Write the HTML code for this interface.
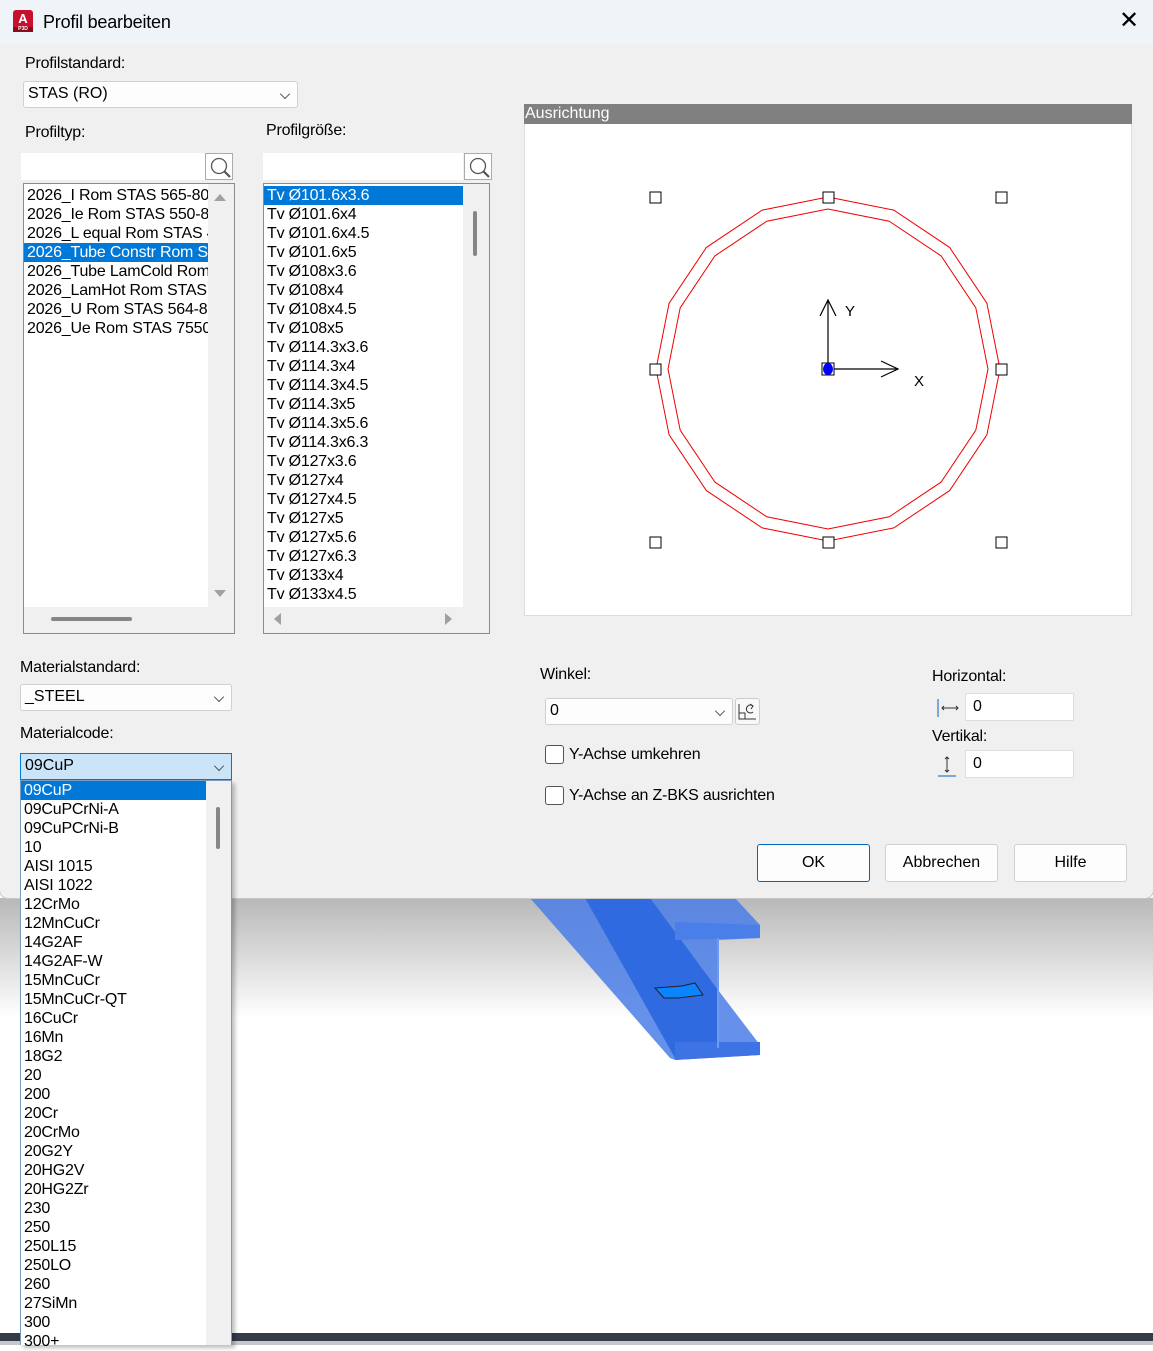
<!DOCTYPE html>
<html><head><meta charset="utf-8"><style>
*{box-sizing:border-box;margin:0;padding:0}
body{width:1153px;height:1345px;position:relative;overflow:hidden;background:#fff;font-family:"Liberation Sans",sans-serif;font-size:16px;color:#000}
.a{position:absolute}
.dlg{left:0;top:0;width:1153px;height:898px;background:#f0f0f0;box-shadow:0 0 0 1px #c8c8c8;border-radius:0 0 8px 8px}
.lbl{position:absolute;font-size:16px;white-space:nowrap;letter-spacing:-0.2px}
.box{position:absolute;background:#fff;border:1px solid #d0d0d0}
.combo{position:absolute;background:#fdfdfd;border:1px solid #d0d0d0;border-radius:3px;padding-left:4px;line-height:24px}
.chev{position:absolute;right:8px;top:8px;width:8px;height:8px;border-right:1px solid #444;border-bottom:1px solid #444;transform:rotate(45deg) scale(.9)}
.list div{height:19px;line-height:19px;white-space:nowrap;padding-left:3px;letter-spacing:-0.2px}
.sel{background:#0078d7;color:#fff}
.btn{position:absolute;background:#fdfdfd;border:1px solid #d0d0d0;border-radius:3px;text-align:center;line-height:36px;height:38px;width:113px}
.cb{position:absolute;width:19px;height:19px;border:1px solid #555;border-radius:3px;background:#fff}
</style></head><body>
<div class="a" style="left:0;top:898px;width:1153px;height:120px;background:linear-gradient(#b8b8b8,#fff)"></div>
<svg class="a" style="left:500px;top:880px" width="280" height="190">
<polygon points="30,18 235,18 260,45 260,58 218,60 218,110 260,165 260,175 175,180 170,178" fill="#4a7ee8" opacity=".85"/>
<polygon points="85,18 150,18 218,110 218,170 175,178" fill="#2f6ae0"/>
<polygon points="175,42 260,45 260,58 175,60" fill="#4a7ee8"/>
<polygon points="175,162 260,162 260,175 175,180" fill="#3d73e5"/>
<line x1="218" y1="58" x2="218" y2="168" stroke="#6d9af0" stroke-width="2"/>
<polygon points="155,108 182,106 195,103 203,115 178,118 164,118" fill="#0a84ff" stroke="#222"/>
</svg>
<div class="a" style="left:0;top:1333px;width:1153px;height:8px;background:#333d4a"></div>
<div class="a" style="left:0;top:1341px;width:1153px;height:4px;background:#c8c8c8"></div>

<div class="a dlg">
<div class="a" style="left:0;top:0;width:1153px;height:44px;background:#eef4f7"></div>
<div class="a" style="left:13px;top:10px;width:20px;height:22px;background:#c8102e;border-radius:3px;color:#fff;font-size:13px;font-weight:bold;text-align:center;line-height:17px">A<div style="font-size:5px;line-height:5px;background:#8a0a1e">P3D</div></div>
<div class="lbl" style="left:43px;top:12px;font-size:18px">Profil bearbeiten</div>
<div class="lbl" style="left:1119px;top:6px;font-size:24px;font-weight:lighter">✕</div>

<div class="lbl" style="left:25px;top:55px">Profilstandard:</div>
<div class="combo" style="left:23px;top:81px;width:275px;height:27px">STAS (RO)<span class="chev"></span></div>
<div class="lbl" style="left:25px;top:124px">Profiltyp:</div>
<div class="lbl" style="left:266px;top:122px">Profilgröße:</div>

<div class="box" style="left:21px;top:153px;width:184px;height:27px;border:none"></div>
<div class="box" style="left:205px;top:153px;width:28px;height:27px;border:1px solid #aaa"></div>
<svg class="a" style="left:208px;top:155px" width="26" height="26"><circle cx="11" cy="11" r="7.5" fill="none" stroke="#555" stroke-width="1.3"/><line x1="16.5" y1="16.5" x2="22" y2="22" stroke="#555" stroke-width="2.2"/></svg>
<div class="box" style="left:263px;top:153px;width:200px;height:27px;border:none"></div>
<div class="box" style="left:464px;top:153px;width:28px;height:27px;border:1px solid #aaa"></div>
<svg class="a" style="left:467px;top:155px" width="26" height="26"><circle cx="11" cy="11" r="7.5" fill="none" stroke="#555" stroke-width="1.3"/><line x1="16.5" y1="16.5" x2="22" y2="22" stroke="#555" stroke-width="2.2"/></svg>

<div class="a" style="left:23px;top:183px;width:212px;height:451px;border:1px solid #8a8a92;background:#f0f0f0"></div>
<div class="a list" style="left:24px;top:184px;width:184px;height:423px;background:#fff;overflow:hidden;padding-top:2px">
<div>2026_I Rom STAS 565-80</div><div>2026_Ie Rom STAS 550-80</div><div>2026_L equal Rom STAS 424</div><div class="sel">2026_Tube Constr Rom STAS</div><div>2026_Tube LamCold Rom STAS</div><div>2026_LamHot Rom STAS</div><div>2026_U Rom STAS 564-80</div><div>2026_Ue Rom STAS 7550</div></div>
<div class="a" style="left:214px;top:194px;width:0;height:0;border:6px solid transparent;border-bottom:7px solid #a0a0a0;border-top:none"></div>
<div class="a" style="left:214px;top:590px;width:0;height:0;border:6px solid transparent;border-top:7px solid #a0a0a0;border-bottom:none"></div>
<div class="a" style="left:51px;top:617px;width:81px;height:4px;border-radius:2px;background:#868686"></div>

<div class="a" style="left:263px;top:183px;width:227px;height:451px;border:1px solid #8a8a92;background:#f0f0f0"></div>
<div class="a list" style="left:264px;top:184px;width:199px;height:423px;background:#fff;overflow:hidden;padding-top:2px">
<div class="sel">Tv Ø101.6x3.6</div><div>Tv Ø101.6x4</div><div>Tv Ø101.6x4.5</div><div>Tv Ø101.6x5</div><div>Tv Ø108x3.6</div><div>Tv Ø108x4</div><div>Tv Ø108x4.5</div><div>Tv Ø108x5</div><div>Tv Ø114.3x3.6</div><div>Tv Ø114.3x4</div><div>Tv Ø114.3x4.5</div><div>Tv Ø114.3x5</div><div>Tv Ø114.3x5.6</div><div>Tv Ø114.3x6.3</div><div>Tv Ø127x3.6</div><div>Tv Ø127x4</div><div>Tv Ø127x4.5</div><div>Tv Ø127x5</div><div>Tv Ø127x5.6</div><div>Tv Ø127x6.3</div><div>Tv Ø133x4</div><div>Tv Ø133x4.5</div></div>
<div class="a" style="left:473px;top:211px;width:4px;height:45px;border-radius:2px;background:#868686"></div>
<div class="a" style="left:274px;top:613px;border:6px solid transparent;border-right:7px solid #a0a0a0;border-left:none"></div>
<div class="a" style="left:445px;top:613px;border:6px solid transparent;border-left:7px solid #a0a0a0;border-right:none"></div>

<div class="a" style="left:524px;top:104px;width:608px;height:512px;background:#fff;border:1px solid #ddd"></div>
<div class="a" style="left:524px;top:104px;width:608px;height:20px;background:#808080;color:#fff;line-height:20px;padding-left:1px">Ausrichtung</div>
<svg class="a" style="left:0;top:0" width="1153" height="620">
<polygon fill="none" stroke="#e00" stroke-width="1" points="828,197 893.8,210.1 949.6,247.4 986.9,303.2 1000,369 986.9,434.8 949.6,490.6 893.8,527.9 828,541 762.2,527.9 706.4,490.6 669.1,434.8 656,369 669.1,303.2 706.4,247.4 762.2,210.1"/>
<polygon fill="none" stroke="#e00" stroke-width="1" points="828,209 889.2,221.2 941.1,255.9 975.8,307.8 988,369 975.8,430.2 941.1,482.1 889.2,516.8 828,529 766.8,516.8 714.9,482.1 680.2,430.2 668,369 680.2,307.8 714.9,255.9 766.8,221.2"/>
<g fill="#fff" stroke="#000">
<rect x="650" y="192" width="11" height="11"/><rect x="823" y="192" width="11" height="11"/><rect x="996" y="192" width="11" height="11"/>
<rect x="650" y="364" width="11" height="11"/><rect x="996" y="364" width="11" height="11"/>
<rect x="650" y="537" width="11" height="11"/><rect x="823" y="537" width="11" height="11"/><rect x="996" y="537" width="11" height="11"/>
</g>
<g stroke="#000" fill="none" stroke-width="1.2">
<line x1="828" y1="369" x2="828" y2="300"/><polyline points="820,316 828,300 836,316"/>
<line x1="828" y1="369" x2="898" y2="369"/><polyline points="881,361 898,369 881,377"/>
</g>
<rect x="822" y="363" width="12" height="12" fill="#fff" stroke="#000"/>
<ellipse cx="828" cy="369" rx="5" ry="6" fill="#00f"/>
<text x="845" y="316" font-family="Liberation Sans" font-size="15">Y</text>
<text x="914" y="386" font-family="Liberation Sans" font-size="15">X</text>
</svg>

<div class="lbl" style="left:20px;top:659px">Materialstandard:</div>
<div class="combo" style="left:20px;top:684px;width:212px;height:27px">_STEEL<span class="chev"></span></div>
<div class="lbl" style="left:20px;top:725px">Materialcode:</div>
<div class="combo" style="left:20px;top:753px;width:212px;height:27px;background:#cce4f7;border-color:#0078d7;border-radius:0">09CuP<span class="chev"></span></div>

<div class="lbl" style="left:540px;top:666px">Winkel:</div>
<div class="combo" style="left:545px;top:698px;width:188px;height:27px">0<span class="chev"></span></div>
<div class="a" style="left:735px;top:698px;width:25px;height:27px;border:1px solid #ccc;border-radius:3px;background:#f8f8f8"></div>
<svg class="a" style="left:737px;top:700px" width="22" height="22"><polyline points="2,4 2,19 19,19" fill="none" stroke="#333"/><rect x="2" y="13" width="6" height="6" fill="none" stroke="#333"/><path d="M16,6 A4,4 0 1 0 16,12" fill="none" stroke="#333"/><polyline points="13,4 16,6 14,9" fill="none" stroke="#333"/></svg>
<div class="cb" style="left:545px;top:745px"></div>
<div class="lbl" style="left:569px;top:746px">Y-Achse umkehren</div>
<div class="cb" style="left:545px;top:786px"></div>
<div class="lbl" style="left:569px;top:787px">Y-Achse an Z-BKS ausrichten</div>

<div class="lbl" style="left:932px;top:668px">Horizontal:</div>
<svg class="a" style="left:936px;top:697px" width="24" height="22"><line x1="2" y1="2" x2="2" y2="20" stroke="#0062c4"/><line x1="6" y1="11" x2="22" y2="11" stroke="#333"/><polyline points="8,9 6,11 8,13" fill="none" stroke="#333"/><polyline points="20,9 22,11 20,13" fill="none" stroke="#333"/></svg>
<div class="box" style="left:965px;top:693px;width:109px;height:28px;border:1px solid #ddd;padding-left:7px;line-height:26px">0</div>
<div class="lbl" style="left:932px;top:728px">Vertikal:</div>
<svg class="a" style="left:936px;top:754px" width="24" height="24"><line x1="2" y1="22" x2="20" y2="22" stroke="#0062c4"/><line x1="11" y1="3" x2="11" y2="18" stroke="#333"/><polyline points="9,5 11,3 13,5" fill="none" stroke="#333"/><polyline points="9,16 11,18 13,16" fill="none" stroke="#333"/></svg>
<div class="box" style="left:965px;top:750px;width:109px;height:28px;border:1px solid #ddd;padding-left:7px;line-height:26px">0</div>

<div class="btn" style="left:757px;top:844px;border-color:#0067c0">OK</div>
<div class="btn" style="left:885px;top:844px">Abbrechen</div>
<div class="btn" style="left:1014px;top:844px">Hilfe</div>
</div>

<div class="a" style="left:20px;top:780px;width:212px;height:565px;background:#fff;border:1px solid #7a9cc0;border-bottom:none;box-shadow:3px 3px 4px rgba(0,0,0,.25)"></div>
<div class="a" style="left:206px;top:781px;width:25px;height:564px;background:#f0f0f0"></div>
<div class="a" style="left:216px;top:807px;width:4px;height:42px;border-radius:2px;background:#868686"></div>
<div class="a list" style="left:21px;top:781px;width:185px">
<div class="sel">09CuP</div><div>09CuPCrNi-A</div><div>09CuPCrNi-B</div><div>10</div><div>AISI 1015</div><div>AISI 1022</div><div>12CrMo</div><div>12MnCuCr</div><div>14G2AF</div><div>14G2AF-W</div><div>15MnCuCr</div><div>15MnCuCr-QT</div><div>16CuCr</div><div>16Mn</div><div>18G2</div><div>20</div><div>200</div><div>20Cr</div><div>20CrMo</div><div>20G2Y</div><div>20HG2V</div><div>20HG2Zr</div><div>230</div><div>250</div><div>250L15</div><div>250LO</div><div>260</div><div>27SiMn</div><div>300</div><div>300+</div></div>
</body></html>
